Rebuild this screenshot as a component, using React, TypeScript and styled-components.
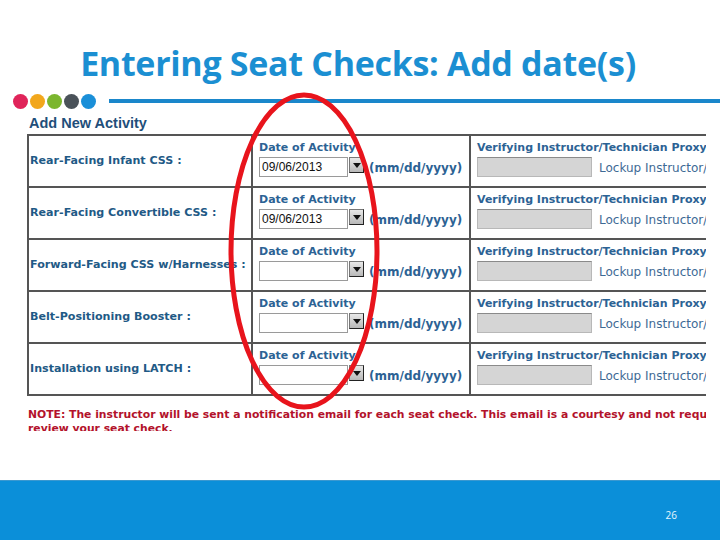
import React from "react";
import styled, { createGlobalStyle } from "styled-components";

const Global = createGlobalStyle`
  html, body { margin: 0; padding: 0; background: #fff; }
  body { width: 720px; height: 540px; overflow: hidden; }
`;

const Slide = styled.div`
  position: relative;
  width: 720px;
  height: 540px;
  display: flex;
  flex-direction: column;
  background: #fff;
  overflow: hidden;
`;

const Title = styled.h1`
  margin: 40px 0 0 0;
  height: 46px;
  text-align: center;
  font-family: "Open Sans", sans-serif;
  font-weight: 700;
  font-size: 34px;
  line-height: 46px;
  color: #1b8fd2;
  letter-spacing: -0.3px;
  padding-right: 4px;
`;

const DividerRow = styled.div`
  display: flex;
  align-items: center;
  margin-top: 7px;
  padding-left: 13px;
  height: 16px;
`;

const Dot = styled.span<{ $c: string }>`
  width: 15px;
  height: 15px;
  border-radius: 50%;
  background: ${(p) => p.$c};
  margin-right: 2px;
  flex: none;
`;

const Rule = styled.div`
  flex: 1;
  height: 4px;
  background: #1a87cb;
  margin-left: 11px;
`;

const Capture = styled.div`
  margin: 5px 0 0 27px;
  width: 679px;
  height: 317px;
  overflow: hidden;
  font-family: "DejaVu Sans", Verdana, sans-serif;
`;

const CaptureHead = styled.div`
  height: 20px;
  padding-left: 2px;
  font-family: "Liberation Sans", Arial, sans-serif;
  font-weight: 700;
  font-size: 14.5px;
  line-height: 18px;
  color: #1f4f7a;
`;

const Table = styled.div`
  width: 720px;
  display: grid;
  grid-template-columns: 224px 218px 1fr;
  border-top: 2px solid #555;
  border-left: 2px solid #555;
`;

const Cell = styled.div`
  height: 50px;
  border-bottom: 2px solid #555;
  border-right: 2px solid #555;
  box-sizing: content-box;
  display: flex;
  flex-direction: column;
  justify-content: center;
`;

const LabelCell = styled(Cell)`
  padding-left: 1px;
  height: 48px;
  padding-bottom: 2px;
  font-weight: 700;
  font-size: 11.1px;
  color: #1f5a86;
  white-space: nowrap;
  overflow: hidden;
`;

const FieldCell = styled(Cell)`
  justify-content: flex-start;
  padding: 6px 0 0 6px;
  height: 44px;
`;

const FieldLabel = styled.div`
  font-weight: 700;
  font-size: 11px;
  line-height: 12px;
  color: #2c6294;
  white-space: nowrap;
`;

const FieldRow = styled.div`
  display: flex;
  align-items: center;
  margin-top: 3px;
  white-space: nowrap;
`;

const DateInput = styled.div`
  width: 85px;
  height: 18px;
  border: 1px solid #9a9a9a;
  background: #fff;
  font-family: "Liberation Sans", Arial, sans-serif;
  font-size: 12px;
  line-height: 18px;
  padding-left: 2px;
  color: #111;
`;

const DropBtn = styled.div`
  width: 13px;
  height: 14px;
  margin: 0 0 4px 1px;
  background: linear-gradient(#e8e8e8, #b8b8b8);
  border: 1px solid #777;
  border-right-color: #222;
  border-bottom-color: #222;
  display: flex;
  align-items: center;
  justify-content: center;
`;

const Hint = styled.span`
  margin-left: 5px;
  margin-top: 1px;
  font-weight: 700;
  font-size: 12px;
  color: #2c6294;
`;

const ProxyInput = styled.div`
  width: 113px;
  height: 18px;
  border: 1px solid #b8b8b8;
  border-top-color: #8a8a8a;
  background: #d5d5d5;
`;

const Lookup = styled.span`
  margin-left: 7px;
  margin-top: 2px;
  font-size: 12px;
  color: #3e6a95;
`;

const Note = styled.div`
  margin-top: 12px;
  padding-left: 1px;
  font-weight: 700;
  font-size: 10.8px;
  line-height: 14px;
  color: #b3122b;
  white-space: nowrap;
`;

const Footer = styled.div`
  margin-top: auto;
  height: 60px;
  background: #0b8fd9;
  border-top: 1px solid #3a98d0;
  box-sizing: border-box;
  display: flex;
  align-items: center;
  justify-content: flex-end;
  padding-right: 43px;
  padding-top: 8px;
  font-family: "Open Sans", sans-serif;
  font-size: 10px;
  color: #e6f6ff;
`;

const Circle = styled.svg`
  position: absolute;
  left: 0;
  top: 0;
  pointer-events: none;
`;

const rows = [
  { label: "Rear-Facing Infant CSS :", date: "09/06/2013" },
  { label: "Rear-Facing Convertible CSS :", date: "09/06/2013" },
  { label: "Forward-Facing CSS w/Harnesses :", date: "" },
  { label: "Belt-Positioning Booster :", date: "" },
  { label: "Installation using LATCH :", date: "" },
];

const dots = ["#e0245a", "#f2a71c", "#7bb62f", "#4a5259", "#1a8fd8"];

export default function App() {
  return (
    <Slide>
      <Global />
      <Title>Entering Seat Checks: Add date(s)</Title>
      <DividerRow>
        {dots.map((c) => (
          <Dot key={c} $c={c} />
        ))}
        <Rule />
      </DividerRow>
      <Capture>
        <CaptureHead>Add New Activity</CaptureHead>
        <Table>
          {rows.map((r) => (
            <React.Fragment key={r.label}>
              <LabelCell>{r.label}</LabelCell>
              <FieldCell>
                <FieldLabel>Date of Activity</FieldLabel>
                <FieldRow>
                  <DateInput>{r.date}</DateInput>
                  <DropBtn>
                    <svg width="8" height="5" viewBox="0 0 8 5">
                      <path d="M0 0h8L4 5z" fill="#111" />
                    </svg>
                  </DropBtn>
                  <Hint>(mm/dd/yyyy)</Hint>
                </FieldRow>
              </FieldCell>
              <FieldCell>
                <FieldLabel>Verifying Instructor/Technician Proxy</FieldLabel>
                <FieldRow>
                  <ProxyInput />
                  <Lookup>Lockup Instructor/</Lookup>
                </FieldRow>
              </FieldCell>
            </React.Fragment>
          ))}
        </Table>
        <Note>
          NOTE: The instructor will be sent a notification email for each seat check. This email is a courtesy and not required to
          <br />
          review your seat check.
        </Note>
      </Capture>
      <Footer>26</Footer>
      <Circle width="720" height="540" viewBox="0 0 720 540">
        <ellipse cx="304" cy="251" rx="73" ry="156" fill="none" stroke="#e8141c" strokeWidth="5" />
      </Circle>
    </Slide>
  );
}
